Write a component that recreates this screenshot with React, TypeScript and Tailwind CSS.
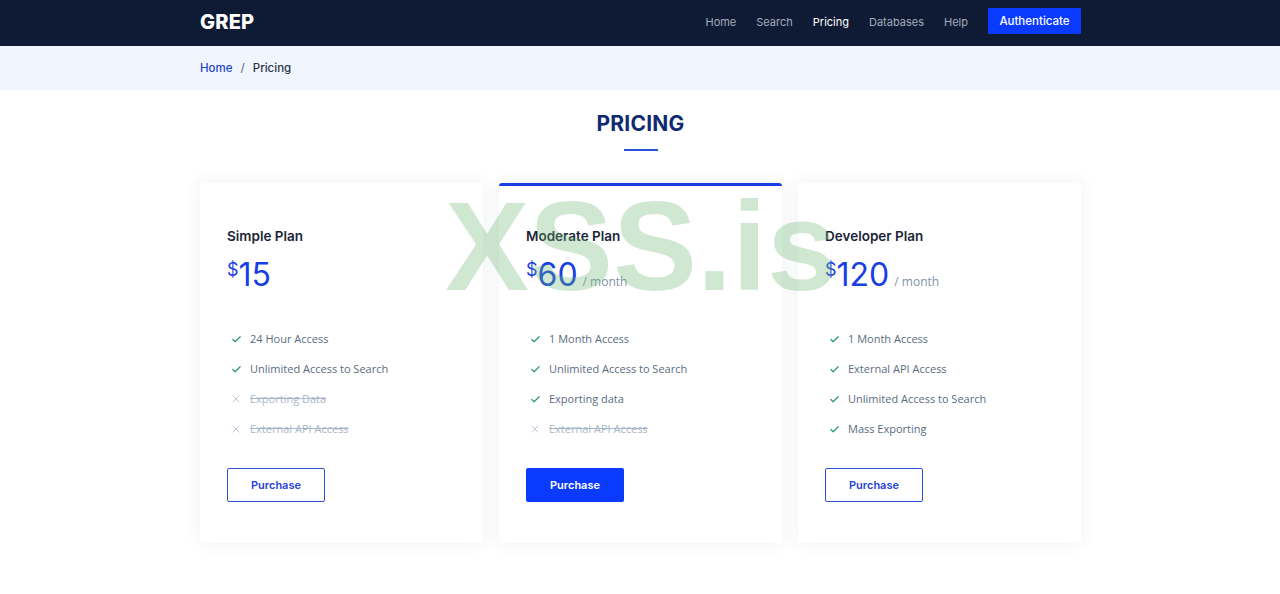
import { Check, X } from 'lucide-react'

type Feature = { text: string; ok: boolean }
type Plan = { name: string; price: string; month: boolean; featured: boolean; features: Feature[] }

const PLANS: Plan[] = [
  {
    name: 'Simple Plan', price: '15', month: false, featured: false,
    features: [
      { text: '24 Hour Access', ok: true },
      { text: 'Unlimited Access to Search', ok: true },
      { text: 'Exporting Data', ok: false },
      { text: 'External API Access', ok: false },
    ],
  },
  {
    name: 'Moderate Plan', price: '60', month: true, featured: true,
    features: [
      { text: '1 Month Access', ok: true },
      { text: 'Unlimited Access to Search', ok: true },
      { text: 'Exporting data', ok: true },
      { text: 'External API Access', ok: false },
    ],
  },
  {
    name: 'Developer Plan', price: '120', month: true, featured: false,
    features: [
      { text: '1 Month Access', ok: true },
      { text: 'External API Access', ok: true },
      { text: 'Unlimited Access to Search', ok: true },
      { text: 'Mass Exporting', ok: true },
    ],
  },
]

const NAV = ['Home', 'Search', 'Pricing', 'Databases', 'Help']

function PlanCard({ p }: { p: Plan }) {
  return (
    <div className="bg-white rounded-[3px] shadow-[0_0_18px_rgba(30,50,90,0.07)] h-[360px] overflow-hidden">
      <div className={p.featured ? 'h-[3px] bg-[#1a3fe0]' : 'h-[3px]'} />
      <div className="px-[27px] pt-[40px]">
        <h3 className="text-[13.5px] font-semibold text-[#1b2538] leading-5">{p.name}</h3>
        <div className="flex items-baseline mt-[13px] h-[36px]">
          <span className="text-[18px] text-[#1a3fe0] self-start leading-none mt-[2px]">$</span>
          <span className="text-[32px] text-[#1a3fe0] leading-none">{p.price}</span>
          {p.month && (
            <span className="text-[12px] text-[#8391a8] ml-[5px] font-['Open_Sans','Liberation_Sans',sans-serif]">/ month</span>
          )}
        </div>
        <ul className="mt-[35px] flex flex-col gap-[12px] font-['Open_Sans','Liberation_Sans',sans-serif]">
          {p.features.map(f => (
            <li key={f.text} className="flex items-center h-[18px] text-[11px]">
              {f.ok
                ? <Check size={11} strokeWidth={2.6} className="text-[#2e9a6a] ml-[4px] mr-[8px] shrink-0" />
                : <X size={12} strokeWidth={1.5} className="text-[#a9b6c8] ml-[3px] mr-[8px] shrink-0" />}
              <span className={f.ok ? 'text-[#5a6b80]' : 'text-[#a9b6c8] line-through'}>{f.text}</span>
            </li>
          ))}
        </ul>
        <button
          className={
            p.featured
              ? 'mt-[30px] w-[98px] h-[34px] rounded-[2px] bg-[#0b3aff] text-white text-[11px] font-semibold'
              : 'mt-[30px] w-[98px] h-[34px] rounded-[2px] border border-[#2e50d6] text-[#1f43d8] text-[11px] font-semibold bg-white'
          }
        >
          Purchase
        </button>
      </div>
    </div>
  )
}

export default function App() {
  return (
    <div className="relative min-h-[594px] bg-white font-['Inter','Liberation_Sans',sans-serif]">
      <header className="bg-[#0f1b34] h-[46px]">
        <div className="w-[882px] mx-auto pl-[1px] h-full flex items-center justify-between">
          <span className="text-white text-[20px] font-extrabold tracking-[0.01em] mt-[-3px]">GREP</span>
          <nav className="flex items-center gap-[20px] text-[11px]">
            {NAV.map(n => (
              <a key={n} className={n === 'Pricing' ? 'text-white mt-[-1px]' : 'text-[#a3abbb] mt-[-1px]'}>{n}</a>
            ))}
            <button className="mt-[-4px] w-[93px] h-[26px] bg-[#0b3aff] text-white text-[11.5px] font-medium rounded-[1px] pt-[1px]">
              Authenticate
            </button>
          </nav>
        </div>
      </header>

      <div className="bg-[#f1f5fd] h-[44px]">
        <div className="w-[880px] mx-auto h-full flex items-center text-[11.5px] font-medium pt-[2px]">
          <a className="text-[#1d43c6]">Home</a>
          <span className="text-[#6c7689] mx-[8px]">/</span>
          <span className="text-[#2a3446]">Pricing</span>
        </div>
      </div>

      <section className="w-[882px] mx-auto pl-[1px] pt-[21px]">
        <div className="flex flex-col items-center">
          <h2 className="text-[21px] font-bold text-[#0f2a70] tracking-[0.01em] leading-[26px]">PRICING</h2>
          <div className="w-[34px] h-[2px] bg-[#2a52dc] mt-[12px]" />
        </div>
        <div className="grid grid-cols-3 gap-[16px] mt-[32px]">
          {PLANS.map(p => <PlanCard key={p.name} p={p} />)}
        </div>
      </section>

      <div className="absolute left-0 right-0 top-[172px] flex justify-center pointer-events-none">
        <span className="text-[126px] font-bold leading-[150px] text-[rgba(110,185,115,0.32)] font-['Liberation_Sans',sans-serif] ml-[2px]">
          XSS.is
        </span>
      </div>
    </div>
  )
}
